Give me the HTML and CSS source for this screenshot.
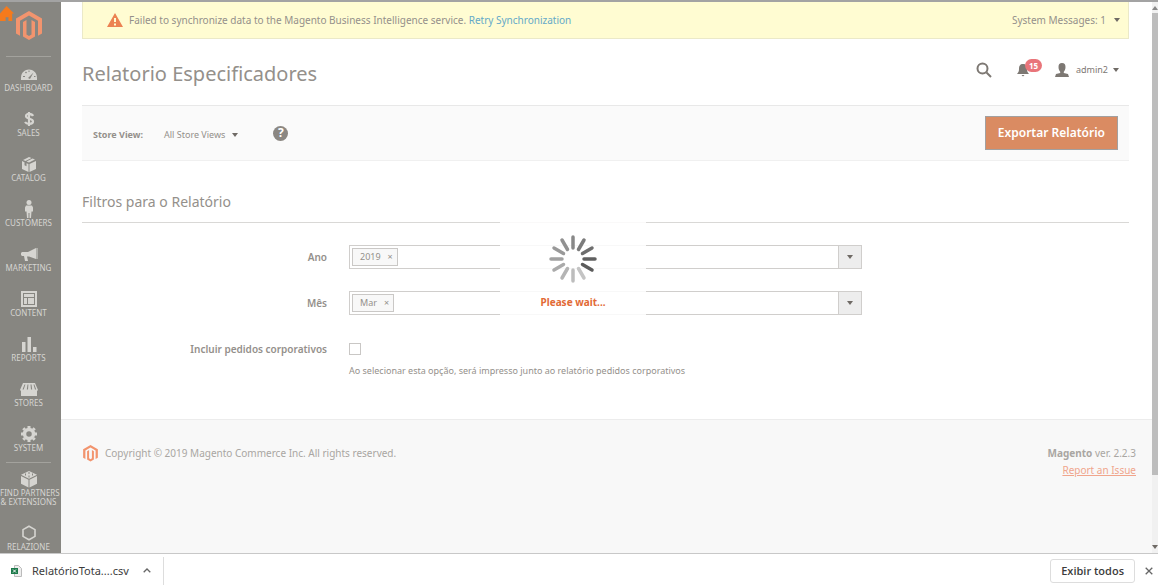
FILE: index.html
```html
<!DOCTYPE html>
<html lang="pt-BR">
<head>
<meta charset="utf-8">
<title>Relatorio Especificadores</title>
<link rel="stylesheet" href="styles.css">
</head>
<body>
<div class="viewport">
  <nav class="sidebar" aria-label="Menu">
    <svg class="home-mark" viewBox="0 0 16 16"><path d="M0 8 7 0l8 8h-2v8H9v-4H6v4H0z"/></svg>
    <a class="brand" href="#"><svg class="logo" viewBox="0 0 26 30"><path d="M13 0 0 7.500v15l4 2.300V9.800l9-5.200 9 5.200v15l4-2.300v-15zM7 11v14.500L13 29l6-3.500V11l-3.500-2v14.500L13 25l-2.500-1.500V9z"/></svg></a>
    <ul class="menu">
      <li><a href="#"><svg viewBox="0 0 18 18"><path fill-rule="evenodd" d="M1 15a8 8 0 0 1 0-2C1 1.500 17 1.500 17 13v2zM8 13l2 1 3.500-6.500zM3 11h2v1H3zM5 7.500l1 1 1-1-1-1zM8.500 5.500h1V7h-1zM14 11h1.500v1H14z"/></svg>DASHBOARD</a></li>
      <li><a href="#"><svg viewBox="0 0 18 18"><path class="line" stroke-width="2.200" d="M13 6C12 3.500 6 3 6 6c0 3.500 7 2 7 5.500 0 3-6.500 3-8 .5M9 2v14"/></svg>SALES</a></li>
      <li><a href="#"><svg viewBox="0 0 18 18"><path d="m9 2 2.500 1-6 3L3 5zM12.500 3.500 15 4.500 9 7.500 6.500 6.500zM2 6l2.500 1.200v3l2 1v-3L8.500 9v8L2 14zM16 6v8l-6.500 3V9z"/></svg>CATALOG</a></li>
      <li><a href="#"><svg viewBox="0 0 18 18"><circle cx="9" cy="2.500" r="2.500"/><path d="M6 5.500h6l1 2v4h-1.500L11 18H9.500v-5h-1v5H7l-.5-6.500H5v-4z"/></svg>CUSTOMERS</a></li>
      <li><a href="#"><svg viewBox="0 0 18 18"><path d="M16 3v11l-7-2.500H7l1 4.500H5l-1-5H2L1 10V8l1-1h6zM16.500 3h1v11h-1z"/></svg>MARKETING</a></li>
      <li><a href="#"><svg viewBox="0 0 18 18"><path fill-rule="evenodd" d="M1 1h16v16H1zM3 3v12h12V3zM4 4h10v3H4zM4 8h3v6H4zM8 8h6v6H8z"/></svg>CONTENT</a></li>
      <li><a href="#"><svg viewBox="0 0 18 18"><path d="M2 7h3.500v10H2zM7.500 2H11v15H7.500zM13 12h3.500v5H13z"/></svg>REPORTS</a></li>
      <li><a href="#"><svg viewBox="0 0 18 18"><path fill-rule="evenodd" d="M3 3h12l3 7-1 1v5H1v-5l-1-1zM4.500 4.500 2.500 9.500h1.200l1.700-5zM7.500 4.500l-.7 5H8l.4-5zM10.500 4.500l.5 5h1.200l-.7-5zM13.500 4.500l1.500 5h1.200l-1.800-5z"/></svg>STORES</a></li>
      <li><a href="#"><svg viewBox="0 0 18 18"><circle class="line" cx="9" cy="9" r="4.500" stroke-width="3.500"/><path class="line" stroke-width="3" d="M9 1v2M9 15v2M1 9h2M15 9h2M3.300 3.300l1.500 1.500M13.200 13.200l1.500 1.500M14.700 3.300l-1.500 1.500M4.800 13.200l-1.500 1.500"/></svg>SYSTEM</a></li>
    </ul>
    <ul class="menu extras">
      <li><a href="#"><svg viewBox="0 0 18 18"><path d="m9 1 8 3.700-8 4L1 4.700zM1 6l7.500 3.800V17.500L1 13.800zM17 6v7.800l-7.500 3.700V9.800z"/><path class="stud" d="M5.500 3.500v2M9 2v2M9 5.500v2M12.500 3.500v2"/></svg>FIND PARTNERS<br>&amp; EXTENSIONS</a></li>
      <li><a href="#"><svg viewBox="0 0 18 18"><path class="line" stroke-width="1.600" d="m9 2.200 6 3.400v6.800l-6 3.400-6-3.400V5.600z"/></svg>RELAZIONE</a></li>
    </ul>
  </nav>

  <div class="page">
    <main class="content">
      <div class="notice">
        <svg class="warn" viewBox="0 0 16 14"><path fill-rule="evenodd" d="M8 0 16 14H0zM7 5v4h2V5zM7 10.500v2h2v-2z"/></svg>
        <p>Failed to synchronize data to the Magento Business Intelligence service. <a href="#">Retry Synchronization</a></p>
        <button class="messages" type="button">System Messages: 1 <i class="caret"></i></button>
      </div>
      <header class="header">
        <h1>Relatorio Especificadores</h1>
        <button type="button" aria-label="Search"><svg class="search" viewBox="0 0 16 16"><circle cx="6.500" cy="6.500" r="5"/><path d="m10.500 10.500 4.500 4.500"/></svg></button>
        <button class="bell" type="button" aria-label="Notifications"><svg viewBox="0 0 12 14"><path d="M6 1c3 0 4 2 4 5 0 2 .5 3.500 2 5H0c1.500-1.500 2-3 2-5 0-3 1-5 4-5zM4.500 12h3L6 13.500z"/></svg><span class="badge">15</span></button>
        <button class="user" type="button"><svg viewBox="0 0 14 14"><path d="M7 0c2.500 0 3.500 1.500 3.500 4S9.500 8 8.800 8.800V10l4.200 1 1 3H0l1-3 4.200-1V8.800C4.500 8 3.500 6.500 3.500 4S4.500 0 7 0z"/></svg>admin2 <i class="caret"></i></button>
      </header>
      <div class="toolbar">
        <strong>Store View:</strong>
        <button class="store" type="button">All Store Views <i class="caret"></i></button>
        <button class="help" type="button">?</button>
        <button class="export" type="button">Exportar Relatório</button>
      </div>
      <form class="filters">
        <h2>Filtros para o Relatório</h2>
        <div class="row">
          <span class="label">Ano</span>
          <div class="multi"><span class="chip">2019<button type="button" aria-label="Remover 2019">×</button></span><button class="drop" type="button" aria-label="Ano"><i class="caret"></i></button></div>
        </div>
        <div class="row">
          <span class="label">Mês</span>
          <div class="multi"><span class="chip">Mar<button type="button" aria-label="Remover Mar">×</button></span><button class="drop" type="button" aria-label="Mês"><i class="caret"></i></button></div>
        </div>
        <div class="row">
          <label class="label" for="corp">Incluir pedidos corporativos</label>
          <input id="corp" type="checkbox">
        </div>
        <p class="note">Ao selecionar esta opção, será impresso junto ao relatório pedidos corporativos</p>
      </form>
    </main>
    <footer class="footer">
      <svg class="logo" viewBox="0 0 26 30"><path d="M13 0 0 7.500v15l4 2.300V9.800l9-5.200 9 5.200v15l4-2.300v-15zM7 11v14.500L13 29l6-3.500V11l-3.500-2v14.500L13 25l-2.500-1.500V9z"/></svg>
      <p class="copy">Copyright © 2019 Magento Commerce Inc. All rights reserved.</p>
      <p class="version"><strong>Magento</strong> ver. 2.2.3<br><a href="#">Report an Issue</a></p>
    </footer>
  </div>

  <div class="scrollbar"><i class="caret up"></i><span class="thumb"></span><i class="caret"></i></div>

  <div class="loading">
    <div class="loader" role="status">
      <svg viewBox="-24 -24 48 48">
        <path stroke="#888" d="M0-11v-11"/><path stroke="#7b7b7b" d="m5.500-9.500 5.500-9.500"/><path stroke="#6e6e6e" d="m9.500-5.500 9.500-5.500"/><path stroke="#606060" d="M11 0h11"/><path stroke="#5b5b5b" d="m9.500 5.500 9.500 5.500"/><path stroke="#c4c4c4" d="m5.500 9.500 5.500 9.500"/><path stroke="#bdbdbd" d="M0 11v11"/><path stroke="#b4b4b4" d="m-5.500 9.500-5.500 9.500"/><path stroke="#aaa" d="m-9.500 5.500-9.500 5.500"/><path stroke="#a1a1a1" d="M-11 0h-11"/><path stroke="#999" d="m-9.500-5.500-9.500-5.500"/><path stroke="#919191" d="m-5.500-9.500-5.500-9.500"/>
      </svg>
      <strong>Please wait...</strong>
    </div>
  </div>
</div>
<div class="downloads">
  <button class="file" type="button"><svg class="sheet" viewBox="0 0 11 12"><path fill="#eee" stroke="#bbb" d="M3.500.5h4l3 3v8h-7z"/><path fill="#1d7a4b" d="M0 3h7v6H0z"/><path stroke="#fff" d="m2 4.500 3 3M5 4.500l-3 3"/></svg>RelatórioTota....csv<svg class="chevron" viewBox="0 0 8 5"><path d="m.7 4.300 3.300-3.300 3.300 3.300"/></svg></button>
  <button class="show-all" type="button">Exibir todos</button>
  <button class="close" type="button" aria-label="Fechar"><svg viewBox="0 0 8 8"><path d="m.7.7 6.600 6.600M7.300.7.7 7.300"/></svg></button>
</div>
</body>
</html>
```
FILE: styles.css
```css
* { box-sizing: border-box; }
body {
  margin: 0;
  height: 100vh;
  display: flex;
  flex-direction: column;
  overflow: hidden;
  background: #fff;
  color: #94908b;
  font: 10px/16px "Noto Sans", "Open Sans", sans-serif;
}
h1, h2, p, ul { margin: 0; padding: 0; font-weight: 400; }
ul { list-style: none; }
a { color: inherit; text-decoration: none; }
button {
  display: flex;
  align-items: center;
  padding: 0;
  border: 0;
  background: none;
  color: inherit;
  font: inherit;
}
svg { display: block; flex: none; fill: currentColor; }
.caret {
  flex: none;
  border: 3px solid transparent;
  border-top: 4px solid #6f6a65;
  border-bottom: 0;
}
.caret.up { border-top: 0; border-bottom: 4px solid #888; }

.viewport {
  position: relative;
  flex: 1;
  min-height: 0;
  display: flex;
  overflow: hidden;
  border-top: 2px solid #a3a3a3;
}
.sidebar {
  position: relative;
  flex: none;
  width: 61px;
  padding-right: 4px;
  overflow: hidden;
  background: #878681;
  color: #d6d5d1;
  text-align: center;
}
.home-mark {
  position: absolute;
  top: 3px;
  left: 0;
  width: 15px;
  height: 17px;
  color: #f57a1c;
}
.brand {
  display: flex;
  justify-content: center;
  height: 55px;
  margin: 0 6px;
  padding-top: 9px;
  border-bottom: 1px solid #a3a29d;
}
.logo { width: 26px; height: 30px; color: #f2946e; }
.menu li { height: 45px; padding-top: 8px; }
.menu a {
  display: block;
  font: 400 8px/9px "Noto Sans", "Open Sans", sans-serif;
  white-space: nowrap;
}
.menu svg { width: 18px; height: 18px; margin: 0 auto; }
.line { fill: none; stroke: currentColor; }
.stud { fill: none; stroke: #878681; }
.extras::before {
  content: "";
  display: block;
  height: 1px;
  margin: 0 6px;
  background: #a3a29d;
}
.menu.extras li { height: 54px; padding-top: 7px; }

.page { flex: 1; min-width: 0; display: flex; flex-direction: column; }
.content { flex: none; padding: 0 23px 40px 21px; }
.notice {
  display: flex;
  align-items: center;
  height: 37px;
  padding: 0 8px 0 24px;
  border: 1px solid #ebe9c8;
  border-top: 0;
  background: #fffcd2;
}
.warn { width: 16px; height: 14px; margin-right: 6px; color: #ec8252; }
.notice a { color: #64a9c8; }
.messages { gap: 8px; margin-left: auto; }
.header { display: flex; align-items: center; height: 66px; padding: 0 10px 4px 0; }
h1 { flex: 1; font-size: 20px; line-height: 28px; padding-top: 8px; }
.search { width: 16px; height: 16px; fill: none; stroke: currentColor; stroke-width: 2; }
.header button { color: #7d7873; }
.header .bell { position: relative; margin: 0 26px 0 25px; }
.bell svg { width: 12px; height: 14px; }
.badge {
  position: absolute;
  left: 8px;
  top: -4px;
  padding: 0 4px;
  border-radius: 7px;
  background: #e9757a;
  color: #fff;
  font: 700 8px/13px "Open Sans", sans-serif;
}
.user { gap: 5px; font-size: 9px; }
.user svg { width: 14px; height: 14px; margin-right: 2px; }
.toolbar {
  display: flex;
  align-items: center;
  height: 56px;
  padding: 0 11px;
  border-top: 1px solid #e8e8e8;
  border-bottom: 1px solid #f0f0f0;
  background: #fafafa;
}
.toolbar strong { padding-top: 4px; margin-right: 21px; font-size: 9px; }
.store { gap: 7px; padding-top: 4px; margin-right: 35px; font-size: 9px; }
.help {
  justify-content: center;
  width: 15px;
  height: 15px;
  border-radius: 50%;
  background: #8b8782;
  color: #fff;
  font-size: 12px;
  font-weight: 700;
}
.export {
  height: 34px;
  margin-left: auto;
  padding: 0 12px;
  border: 1px solid #a2a0a0;
  background: #da8b62;
  color: #fff;
  font-size: 12px;
  font-weight: 600;
}
h2 {
  height: 62px;
  padding-top: 31px;
  margin-bottom: 22px;
  border-bottom: 1px solid #d9d8d6;
  font-size: 14px;
  line-height: 20px;
}
.row { display: flex; align-items: center; height: 24px; margin-bottom: 22px; }
.label { width: 245px; margin-right: 22px; text-align: right; font-weight: 600; }
.multi {
  display: flex;
  align-items: center;
  flex: 0 1 513px;
  height: 24px;
  padding-left: 2px;
  border: 1px solid #d0cecc;
}
.chip {
  display: flex;
  align-items: center;
  gap: 7px;
  height: 18px;
  padding: 0 4px 0 7px;
  border: 1px solid #cac8c6;
  background: #f8f8f8;
  font-size: 9px;
}
.drop {
  justify-content: center;
  width: 23px;
  height: 22px;
  margin-left: auto;
  border-left: 1px solid #d0cecc;
  background: #ededed;
}
input {
  appearance: none;
  width: 12px;
  height: 12px;
  margin: 0;
  border: 1px solid #c9c7c5;
  background: #fff;
}
.note { margin: -20px 0 0 267px; font-size: 9px; }
.footer {
  flex: 1;
  display: flex;
  align-items: flex-start;
  padding: 25px 16px 0 22px;
  border-top: 1px solid #ececec;
  background: #f8f8f8;
  color: #a9a6a2;
  line-height: 17px;
}
.footer .logo { width: 15px; height: 17px; margin-right: 7px; }
.copy { flex: 1; }
.version { text-align: right; }
.version a { color: #f0a58c; text-decoration: underline; }

.scrollbar {
  flex: none;
  display: flex;
  flex-direction: column;
  align-items: center;
  width: 6px;
  padding: 4px 0;
  background: #f1f1f1;
}
.thumb { flex: 0 0 85%; width: 6px; margin: 3px 0 auto; background: #bdbdbd; }
.loading {
  position: absolute;
  inset: 0 12px 18px 0;
  display: flex;
  align-items: center;
  justify-content: center;
}
.loader {
  display: flex;
  flex-direction: column;
  align-items: center;
  width: 146px;
  height: 95px;
  padding-top: 14px;
  background: rgba(255, 255, 255, .85);
  color: #e26a35;
}
.loader svg {
  width: 48px;
  height: 48px;
  margin-bottom: 11px;
  stroke-width: 3.5;
  stroke-linecap: round;
}

.downloads {
  flex: none;
  display: flex;
  align-items: center;
  height: 34px;
  padding-right: 5px;
  border-top: 1px solid #c8c8c8;
  background: #fff;
  color: #3c3c3c;
  font-size: 11px;
}
.file { height: 28px; padding: 0 12px 0 11px; border-right: 1px solid #ddd; }
.sheet { width: 11px; height: 12px; margin-right: 10px; }
.chevron { width: 8px; height: 5px; margin-left: 14px; }
.chevron, .close svg { fill: none; stroke: #666; stroke-width: 1.3; }
.show-all {
  height: 24px;
  margin-left: auto;
  padding: 0 10px;
  border: 1px solid #ddd;
  border-radius: 3px;
  font: 600 11px/16px "Open Sans", sans-serif;
}
.close { margin-left: 10px; }
.close svg { width: 8px; height: 8px; }
```
